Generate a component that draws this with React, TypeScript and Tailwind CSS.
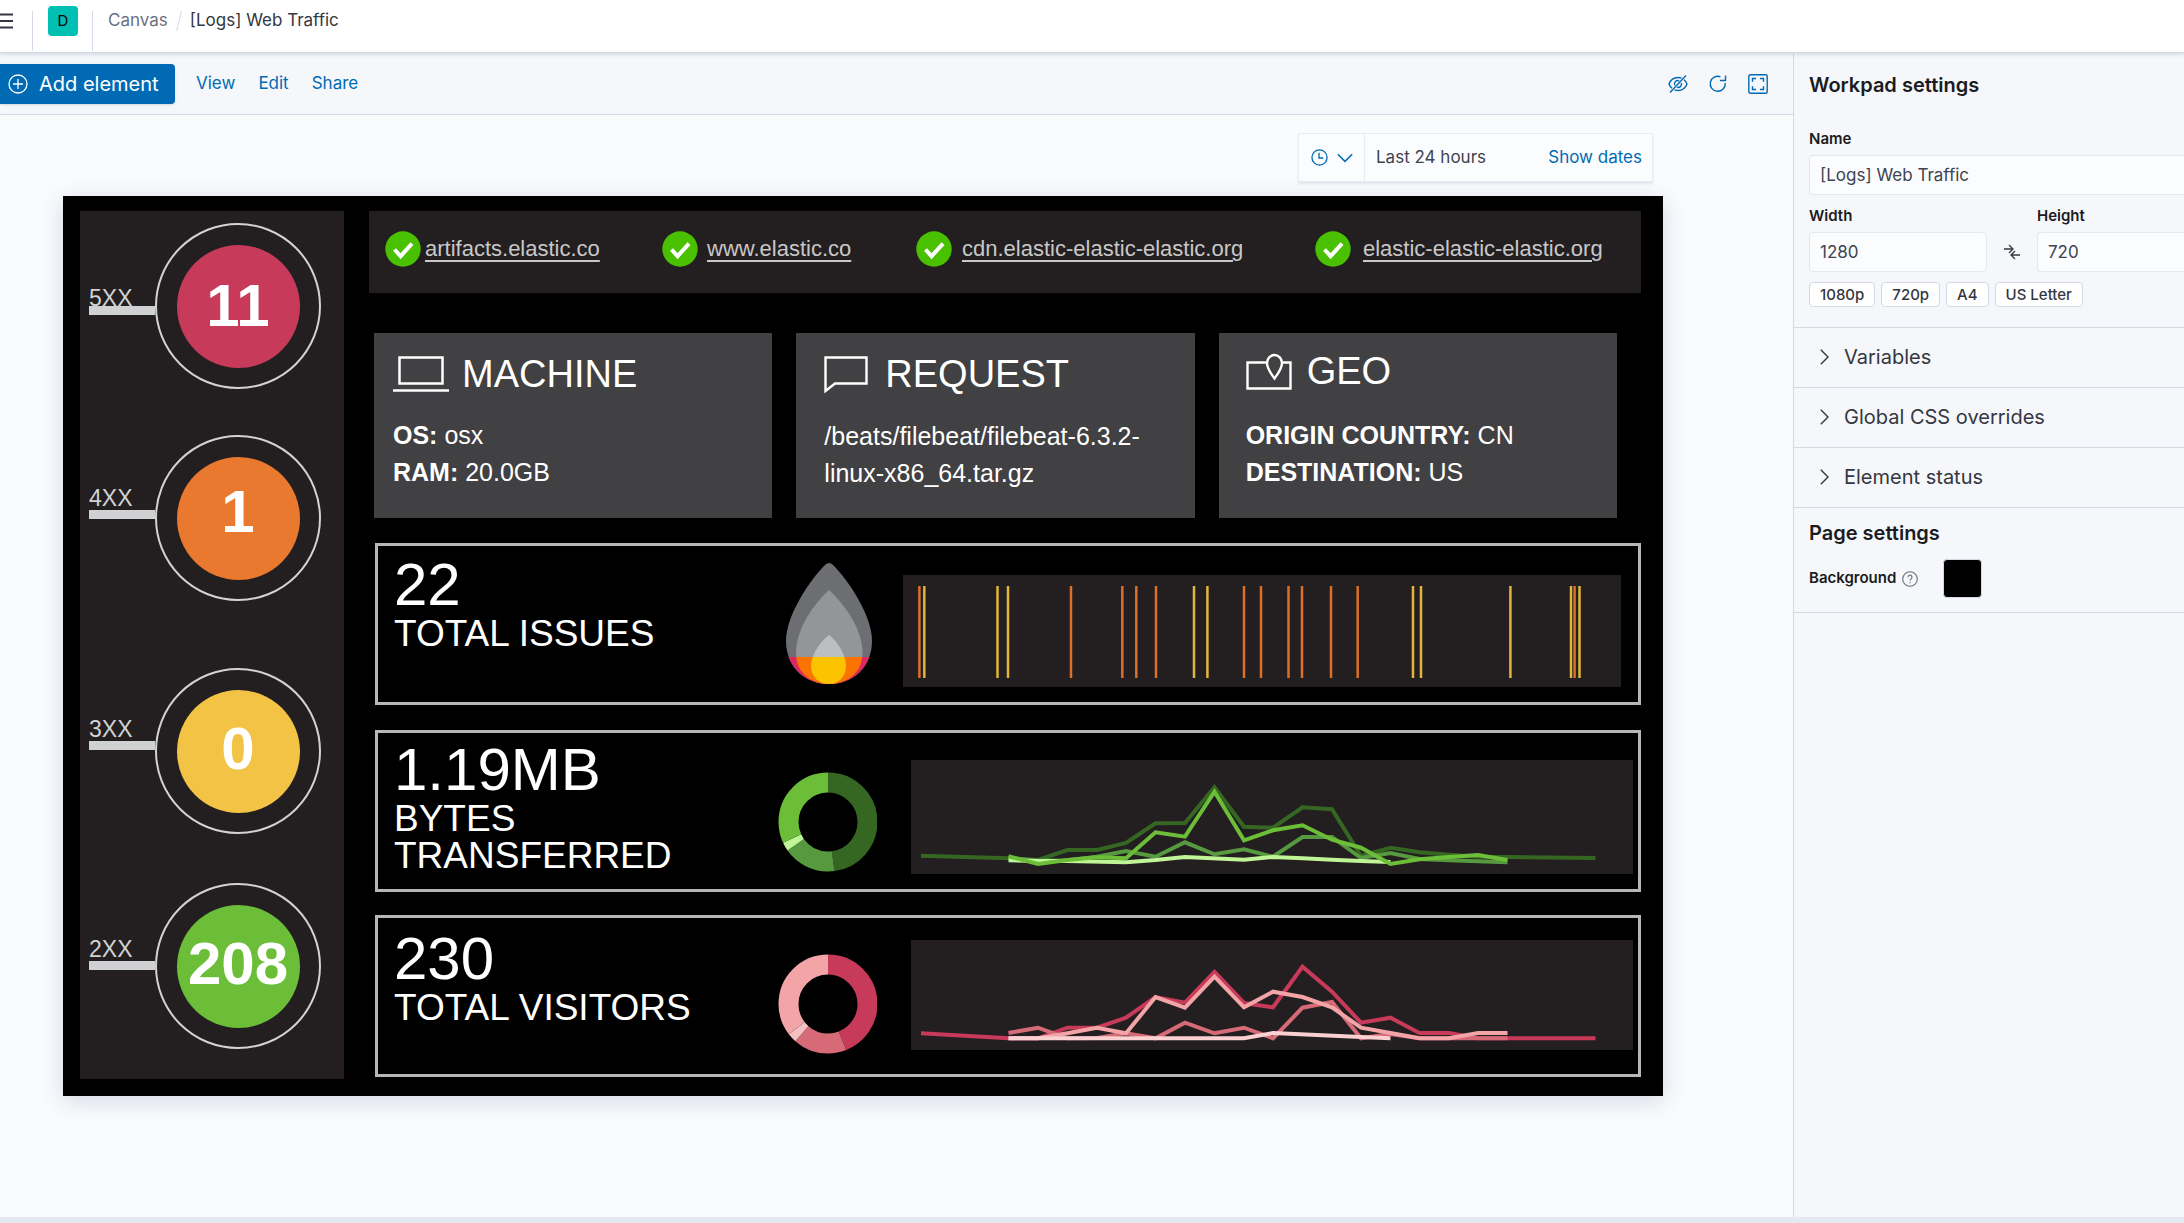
import React, { useId } from "react";

type Gauge = {
  label: string;
  value: string;
  fill: string;
  place: string;
  stem: string;
  labelGap: string;
  lift: string;
};

const gauges: Gauge[] = [
  { label: "5XX", value: "11", fill: "bg-[#c83a5a]", place: "mt-0", stem: "pt-16", labelGap: "-mb-1", lift: "pb-0" },
  { label: "4XX", value: "1", fill: "bg-[#e8792e]", place: "mt-[46px]", stem: "pt-[52px]", labelGap: "mb-0", lift: "pb-3" },
  { label: "3XX", value: "0", fill: "bg-[#f2c344]", place: "mt-[67px]", stem: "pt-[50px]", labelGap: "mb-0", lift: "pb-1" },
  { label: "2XX", value: "208", fill: "bg-[#6cbe39]", place: "mt-[49px]", stem: "pt-[55px]", labelGap: "mb-0", lift: "pb-1" },
];

const hosts = [
  { name: "artifacts.elastic.co", gap: "gap-1" },
  { name: "www.elastic.co", gap: "gap-[9px]" },
  { name: "cdn.elastic-elastic-elastic.org", gap: "gap-2.5" },
  { name: "elastic-elastic-elastic.org", gap: "gap-3" },
];

type Series = { color: string; points: string };

const bytesSeries: Series[] = [
  {
    color: "#356723",
    points:
      "10,95.7 97.5,98.3 127,100 156.5,90 186,90 215,83 244.5,63.3 274,63 303.5,27.3 333,66.7 362,67.7 391.5,47.3 421,49.3 450,96 479.5,87.7 508.5,92.3 538,94.7 567,96.7 596.5,97 684.5,98",
  },
  {
    color: "#56993f",
    points:
      "97.5,97.7 127,100.7 156.5,100.3 186,96.7 215,91 244.5,96.7 274,82.3 303.5,94.3 333,89.3 362,96.7 391.5,77 421,77 450,98 479.5,93 508.5,99 538,100.3 596.5,102.3",
  },
  {
    color: "#bff596",
    points:
      "97.5,100.3 127,101 156.5,101 215,102.3 244.5,100 274,97 333,99.7 362,97 391.5,98.3 421,99.7 450,101 479.5,102",
  },
  {
    color: "#6cbe39",
    points:
      "97.5,96.3 127,104 156.5,100 186,97.3 215,98.3 244.5,72.3 274,76.7 303.5,31.7 333,80.3 362,70.3 391.5,65.3 421,79.7 450,87.7 479.5,104 508.5,99.3 538,97 567,95 596.5,100",
  },
];

const visitorSeries: Series[] = [
  {
    color: "#c83a5a",
    points:
      "10,93.3 97.5,98.3 127,98.3 156.5,87.7 186,87.7 215,77.7 244.5,57 274,62.7 303.5,32 333,63 362,67.3 391.5,26.7 421,51.7 450,82.7 479.5,77.7 508.5,93 538,93 567,98.3 684.5,98.3",
  },
  {
    color: "#d66b77",
    points:
      "97.5,93 127,87.7 156.5,98.3 186,98 215,93.3 244.5,98.3 274,82.7 303.5,93.3 333,87.7 362,98.3 391.5,67.7 421,62 450,98.3 479.5,94 508.5,98.3 596.5,98.3",
  },
  {
    color: "#f3a4a7",
    points:
      "97.5,98.3 127,98.3 156.5,93.3 186,87.7 215,93.3 244.5,57 274,67.7 303.5,36.7 333,67.3 362,51.7 391.5,57 421,67.3 450,87.7 479.5,93 508.5,98.3 538,98.3 567,93 596.5,93",
  },
  { color: "#fad0d2", points: "97.5,98.3 333,98.3 362,93 450,97 479.5,98.3" },
];

const orangeMarks = [16.4, 168, 219.3, 233.3, 253, 341, 358, 385.5, 399, 428, 454.7, 671.6];
const yellowMarks = [21.3, 94.5, 105, 291, 304.4, 510, 518, 607.4, 668, 676.5];

function HostCheck() {
  return (
    <svg viewBox="0 0 36 36" className="size-9 shrink-0" aria-hidden="true">
      <circle cx="18" cy="18" r="17.7" fill="#49c100" />
      <path d="M9.5 18.5 15.6 25.2 27 12.6" fill="none" stroke="#fff" strokeWidth="4" />
    </svg>
  );
}

function LaptopIcon() {
  return (
    <svg viewBox="0 0 56 36" className="h-9 w-14 shrink-0" fill="none" stroke="#fff" strokeWidth="2.5" aria-hidden="true">
      <rect x="6.5" y="1.5" width="43" height="26" />
      <path d="M0 34.5h56" />
    </svg>
  );
}

function CommentIcon() {
  return (
    <svg viewBox="0 0 44 37" className="h-[37px] w-11 shrink-0" fill="none" stroke="#fff" strokeWidth="2.4" aria-hidden="true">
      <path d="M1.5 1.5h41v26H11L1.5 35z" />
    </svg>
  );
}

function MapIcon() {
  return (
    <svg viewBox="0 0 46 37" className="h-[37px] w-[46px] shrink-0" fill="none" stroke="#fff" strokeWidth="2.4" aria-hidden="true">
      <path d="M20.5 9.5H1.5v26h43v-26h-8" />
      <path d="M28.5 25.5c-4-5.5-7.5-10-7.5-15.500a7.500 8 0 0 1 15 0c0 5.500-3.500 10-7.500 15.500z" />
    </svg>
  );
}

function Flame() {
  const id = useId();
  const outer = "M43 0Q45 0 47 2C62 17 86 52 86 78C86 104 67 121 43 121C19 121 0 104 0 78C0 52 24 17 39 2Q41 0 43 0Z";
  const middle = "M43 27C56 39 76.500 64 76.500 90C76.500 109 62 121 43 121C24 121 10 109 10 90C10 64 30 39 43 27Z";
  const inner = "M43 72C50 77 60 91 60 103C60 114 52 121 43 121C33 121 25 114 25 103C25 91 36 77 43 72Z";
  return (
    <svg viewBox="0 0 86 121" className="mt-[17px] h-[121px] w-[86px] shrink-0" aria-hidden="true">
      <clipPath id={id}>
        <rect x="0" y="94" width="86" height="27" />
      </clipPath>
      <path d={outer} fill="#6d6e71" />
      <path d={middle} fill="#939598" />
      <path d={inner} fill="#bcbec0" />
      <g clipPath={`url(#${id})`}>
        <path d={outer} fill="#db2862" />
        <path d={middle} fill="#fb7300" />
        <path d={inner} fill="#fbc300" />
      </g>
    </svg>
  );
}

function Donut({ slices, className }: { slices: { from: number; to: number; color: string }[]; className: string }) {
  return (
    <svg viewBox="0 0 99 100" className={`h-[100px] w-[99px] shrink-0 ${className}`} aria-hidden="true">
      {slices.map((s) => (
        <circle
          key={s.color}
          cx="50"
          cy="50"
          r="39.500"
          fill="none"
          stroke={s.color}
          strokeWidth="20"
          pathLength={360}
          strokeDasharray={`${s.to - s.from} ${360 - s.to + s.from}`}
          strokeDashoffset={-s.from}
          transform="rotate(-90 50 50)"
        />
      ))}
    </svg>
  );
}

function LineChart({ series, height, label }: { series: Series[]; height: number; label: string }) {
  return (
    <svg viewBox={`0 0 722 ${height}`} className="block w-full bg-[#231f20]" role="img" aria-label={label}>
      {series.map((s) => (
        <polyline key={s.color} points={s.points} fill="none" stroke={s.color} strokeWidth="4" />
      ))}
    </svg>
  );
}

function Metric({ value, label, className }: { value: string; label: string; className: string }) {
  return (
    <div className={`shrink-0 pl-4 ${className}`}>
      <p className="text-[60px] leading-[60px]">{value}</p>
      <p className="text-[37px] leading-[37px]">{label}</p>
    </div>
  );
}

function MetricRow({ className, children }: { className: string; children: React.ReactNode }) {
  return <section className={`ml-1.5 flex h-[162px] items-start border-[3px] border-[#b5b6b8] ${className}`}>{children}</section>;
}

function InfoCard({
  title,
  icon,
  className,
  headClass,
  children,
}: {
  title: string;
  icon: React.ReactNode;
  className: string;
  headClass: string;
  children: React.ReactNode;
}) {
  return (
    <section className={`h-[185px] bg-[#414042] ${className}`}>
      <div className={`flex items-center ${headClass}`}>
        {icon}
        <h2 className="text-[38px] leading-10">{title}</h2>
      </div>
      <div className="text-[25px] leading-[37px]">{children}</div>
    </section>
  );
}

function Workpad() {
  return (
    <div className="mt-3.5 mr-[130px] ml-[63px] flex bg-black pt-[15px] pr-[22px] pb-[17px] pl-[17px] font-['Liberation_Sans',Arial,sans-serif] text-white shadow-[0_5px_22px_rgba(60,60,120,0.18)]">
      <section className="w-[264px] shrink-0 bg-[#231f20] pt-3 pb-[30px] pl-[9px]">
        {gauges.map((g) => (
          <div key={g.label} className={`flex ${g.place}`}>
            <div className={`w-[66px] ${g.stem}`}>
              <p className={`text-[23px] leading-[23px] text-[#d1d3d4] ${g.labelGap}`}>{g.label}</p>
              <div className="h-[9px] bg-[#cfd1d2]" />
            </div>
            <div className="flex size-[166px] items-center justify-center rounded-full border-2 border-[#d1d3d4]">
              <div className={`flex size-[123px] items-center justify-center rounded-full ${g.fill}`}>
                <span className={`text-[60px] leading-[60px] font-bold ${g.lift}`}>{g.value}</span>
              </div>
            </div>
          </div>
        ))}
      </section>

      <div className="ml-[25px] min-w-0 flex-1">
        <section className="grid h-[82px] grid-cols-[277fr_254fr_399fr_326fr] items-center bg-[#231f20] pb-1.5 pl-4">
          {hosts.map((h) => (
            <div key={h.name} className={`flex items-center ${h.gap}`}>
              <HostCheck />
              <a href="#" className="text-[22px] leading-7 text-[#c8c8c8] underline underline-offset-4">
                {h.name}
              </a>
            </div>
          ))}
        </section>

        <div className="mt-10 mr-6 ml-[5px] grid grid-cols-3 gap-6 text-white">
          <InfoCard title="MACHINE" icon={<LaptopIcon />} className="pl-[19px]" headClass="gap-[13px] pt-[21px] pb-[23px]">
            <p>
              <strong>OS:</strong> osx
            </p>
            <p>
              <strong>RAM:</strong> 20.0GB
            </p>
          </InfoCard>
          <InfoCard title="REQUEST" icon={<CommentIcon />} className="pl-7" headClass="gap-[17px] pt-[21px] pb-6">
            <p>
              /beats/filebeat/filebeat-6.3.2-
              <br />
              linux-x86_64.tar.gz
            </p>
          </InfoCard>
          <InfoCard title="GEO" icon={<MapIcon />} className="pl-[27px]" headClass="gap-[15px] pt-[18px] pb-[26px]">
            <p>
              <strong>ORIGIN COUNTRY:</strong> CN
            </p>
            <p>
              <strong>DESTINATION:</strong> US
            </p>
          </InfoCard>
        </div>

        <MetricRow className="mt-[25px]">
          <Metric value="22" label="TOTAL ISSUES" className="w-[408px] pt-[9px]" />
          <Flame />
          <div className="mt-[29px] mr-[17px] ml-[31px] flex-1">
            <svg viewBox="0 0 718 112" className="block w-full bg-[#231f20]" role="img" aria-label="Issues over time">
              {yellowMarks.map((x) => (
                <path key={x} d={`M${x} 11V103`} stroke="#e3b53a" strokeWidth="2.5" />
              ))}
              {orangeMarks.map((x) => (
                <path key={x} d={`M${x} 11V103`} stroke="#dc6f29" strokeWidth="2.5" />
              ))}
            </svg>
          </div>
        </MetricRow>

        <MetricRow className="mt-[25px]">
          <Metric value="1.19MB" label="BYTES TRANSFERRED" className="w-[400px] pt-[7px]" />
          <Donut
            className="mt-[39px]"
            slices={[
              { from: 0, to: 172.4, color: "#356723" },
              { from: 172.4, to: 234.8, color: "#56993f" },
              { from: 234.8, to: 245.2, color: "#bff596" },
              { from: 245.2, to: 360, color: "#6cbe39" },
            ]}
          />
          <div className="mt-[27px] mr-[5px] ml-[34px] flex-1">
            <LineChart series={bytesSeries} height={114} label="Bytes transferred over time" />
          </div>
        </MetricRow>

        <MetricRow className="mt-[23px]">
          <Metric value="230" label="TOTAL VISITORS" className="w-[400px] pt-[11px]" />
          <Donut
            className="mt-9"
            slices={[
              { from: 0, to: 158.5, color: "#c83a5a" },
              { from: 158.5, to: 221.4, color: "#d66b77" },
              { from: 221.4, to: 232.3, color: "#f5c0c3" },
              { from: 232.3, to: 360, color: "#f3a4a7" },
            ]}
          />
          <div className="mt-[22px] mr-[5px] ml-[34px] flex-1">
            <LineChart series={visitorSeries} height={110} label="Visitors over time" />
          </div>
        </MetricRow>
      </div>
    </div>
  );
}

function Header() {
  return (
    <header className="relative z-10 flex h-[53px] shrink-0 items-start border-b border-[#d3dae6] bg-white shadow-[0_2px_3px_rgba(152,162,179,0.3)]">
      <button type="button" aria-label="Toggle navigation" className="mt-[13px]">
        <svg viewBox="0 0 13 16" className="h-4 w-[13px]" stroke="#343741" strokeWidth="2" aria-hidden="true">
          <path d="M0 1.500h13M0 8h13M0 14.500h13" />
        </svg>
      </button>
      <div className="mt-[11px] ml-[19px] h-10 w-px bg-[#d3dae6]" />
      <button type="button" className="mt-1.5 ml-[15px] flex size-[30px] items-center justify-center rounded bg-[#00bfb3] text-[15px] text-black">
        D
      </button>
      <div className="mt-[11px] ml-3.5 h-10 w-px bg-[#d3dae6]" />
      <nav aria-label="Breadcrumb" className="ml-[15px] flex h-[42px] items-center text-[17px]">
        <a href="#" className="text-[#69707d]">
          Canvas
        </a>
        <svg viewBox="0 0 6 20" className="mx-2 h-5 w-1.5" stroke="#d3dae6" aria-hidden="true">
          <path d="M5.500 0 .5 20" />
        </svg>
        <span className="text-[#343741]">[Logs] Web Traffic</span>
      </nav>
    </header>
  );
}

function Toolbar() {
  return (
    <div className="flex h-[62px] shrink-0 items-center border-b border-[#d3dae6] bg-[#f5f7fa] text-[17px] text-[#006bb4]">
      <button type="button" className="flex h-10 w-[175px] items-center gap-[11px] rounded-r bg-[#006bb4] pl-2 text-xl text-white shadow-sm">
        <svg viewBox="0 0 20 20" className="size-5" fill="none" stroke="#fff" strokeWidth="1.300" aria-hidden="true">
          <circle cx="10" cy="10" r="9" />
          <path d="M10 5v10M5 10h10" />
        </svg>
        Add element
      </button>
      <button type="button" className="ml-[21px]">View</button>
      <button type="button" className="ml-[23px]">Edit</button>
      <button type="button" className="ml-[23px]">Share</button>
      <div className="mr-[25px] ml-auto flex items-center gap-5">
        <button type="button" aria-label="Hide editing controls">
          <svg viewBox="0 0 20 20" className="size-5" fill="none" stroke="currentColor" strokeWidth="1.400" aria-hidden="true">
            <path d="M18 1.500 2 18.500" />
            <path d="M13.500 4.200C12.400 3.700 11.200 3.500 10 3.500 6 3.500 2.500 6 1 10c.6 1.700 1.600 3.200 3 4.300" />
            <path d="M6.500 15.800c1.100.5 2.300.7 3.500.7 4 0 7.500-2.500 9-6.500-.6-1.700-1.600-3.200-3-4.300" />
            <path d="M11.200 6.800A3.400 3.400 0 0 0 6.700 11.200M8.900 13.200A3.400 3.400 0 0 0 13.300 8.900" />
          </svg>
        </button>
        <button type="button" aria-label="Refresh">
          <svg viewBox="0 0 20 20" className="size-5" fill="none" stroke="currentColor" strokeWidth="1.400" aria-hidden="true">
            <path d="M12.500 2.800A7.500 7.500 0 1 0 17.200 9" />
            <path d="M17.500 1.500V6.500H12" />
          </svg>
        </button>
        <button type="button" aria-label="Enter fullscreen">
          <svg viewBox="0 0 20 20" className="size-5" fill="none" stroke="currentColor" strokeWidth="1.400" aria-hidden="true">
            <rect x=".8" y=".8" width="18.400" height="18.400" rx="1.500" />
            <path d="M4.500 7.800V4.500H8M12 4.500h3.500v3.300M15.500 12.200v3.300H12M8 15.500H4.500v-3.300" />
          </svg>
        </button>
      </div>
    </div>
  );
}

function TimePicker() {
  return (
    <div className="mt-[18px] mr-[140px] ml-auto flex h-[49px] w-[355px] items-center border border-[#e9ecf3] bg-[#fbfcfd] text-[17px] shadow-[0_2px_2px_rgba(152,162,179,0.2)]">
      <button type="button" aria-label="Quick time ranges" className="flex h-full w-[66px] items-center gap-[9px] border-r border-[#e9ecf3] pl-3 text-[#006bb4]">
        <svg viewBox="0 0 18 18" className="size-[17px]" fill="none" stroke="currentColor" strokeWidth="1.400" aria-hidden="true">
          <circle cx="9" cy="9" r="8" />
          <path d="M8.500 4v5.500H13" />
        </svg>
        <svg viewBox="0 0 16 10" className="h-2.5 w-4" fill="none" stroke="currentColor" strokeWidth="1.500" aria-hidden="true">
          <path d="M.8 1.200 8 8.400l7.200-7.200" />
        </svg>
      </button>
      <button type="button" className="pl-[11px] text-[#404350]">Last 24 hours</button>
      <button type="button" className="mr-2.5 ml-auto text-[#006bb4]">Show dates</button>
    </div>
  );
}

const inputBase = "h-10 border border-[#e3e7ef] bg-[#fbfcfd] pl-2.5 text-[17px] text-[#404350] outline-none";

function Sidebar() {
  return (
    <aside className="w-[391px] shrink-0 overflow-hidden border-l border-[#d3dae6] bg-[#f5f7fa] text-[#1a1c21]">
      <div className="pt-[18px] pb-5 pl-[15px]">
        <h2 className="text-xl leading-7 font-semibold">Workpad settings</h2>
        <label htmlFor="pad-name" className="mt-[30px] block text-[15px] leading-5 font-semibold">
          Name
        </label>
        <input id="pad-name" defaultValue="[Logs] Web Traffic" className={`mt-1.5 block w-full rounded-l-sm border-r-0 ${inputBase}`} />
        <div className="mt-[11px] flex">
          <div>
            <label htmlFor="pad-width" className="block text-[15px] leading-5 font-semibold">
              Width
            </label>
            <input id="pad-width" defaultValue="1280" className={`mt-1.5 block w-[178px] rounded-sm ${inputBase}`} />
          </div>
          <button type="button" aria-label="Swap width and height" className="mt-[26px] flex w-[50px] items-center justify-center">
            <svg viewBox="0 0 16 16" className="size-4" fill="none" stroke="#343741" strokeWidth="1.300" aria-hidden="true">
              <path d="M0 5h8M5 1l4 4-4 4M16 11H8M11 7l-4 4 4 4" />
            </svg>
          </button>
          <div className="min-w-0 flex-1">
            <label htmlFor="pad-height" className="block text-[15px] leading-5 font-semibold">
              Height
            </label>
            <input id="pad-height" defaultValue="720" className={`mt-1.5 block w-full rounded-l-sm border-r-0 ${inputBase}`} />
          </div>
        </div>
        <div className="mt-2.5 flex gap-1.5 text-[15px] font-medium text-[#343741]">
          {["1080p", "720p", "A4", "US Letter"].map((size) => (
            <button key={size} type="button" className="h-[25px] rounded-sm border border-[#d3dae6] bg-white px-2.5 leading-[22px]">
              {size}
            </button>
          ))}
        </div>
      </div>
      {["Variables", "Global CSS overrides", "Element status"].map((title) => (
        <button
          key={title}
          type="button"
          aria-expanded="false"
          className="flex h-[60px] w-full items-center gap-[15px] border-t border-[#d3dae6] pb-0.5 pl-[26px] text-xl text-[#343741]"
        >
          <svg viewBox="0 0 9 16" className="h-4 w-[9px]" fill="none" stroke="currentColor" strokeWidth="1.400" aria-hidden="true">
            <path d="M.8.800 8 8 .8 15.200" />
          </svg>
          {title}
        </button>
      ))}
      <div className="border-y border-[#d3dae6] pt-[11px] pb-3.5 pl-[15px]">
        <h2 className="text-xl leading-7 font-semibold">Page settings</h2>
        <div className="mt-3 flex h-[39px] items-center">
          <span className="text-[15px] font-semibold">Background</span>
          <svg viewBox="0 0 16 16" className="ml-1.5 size-4" fill="none" stroke="#69707d" strokeWidth="1.100" aria-hidden="true">
            <circle cx="8" cy="8" r="7.300" />
            <path d="M6 6.200a2 2 0 1 1 3 1.700c-.7.400-1 .8-1 1.600M8 11v1.300" />
          </svg>
          <button type="button" aria-label="Background color" className="ml-[25px] size-[39px] rounded border border-[#d3dae6] bg-black" />
        </div>
      </div>
    </aside>
  );
}

export default function App() {
  return (
    <div className="flex min-h-screen flex-col bg-[#fafbfd] font-[Inter,sans-serif]">
      <Header />
      <div className="flex flex-1">
        <main className="flex min-w-0 flex-1 flex-col">
          <Toolbar />
          <TimePicker />
          <Workpad />
        </main>
        <Sidebar />
      </div>
      <div className="h-1.5 bg-[#e4e8f1]" />
    </div>
  );
}
